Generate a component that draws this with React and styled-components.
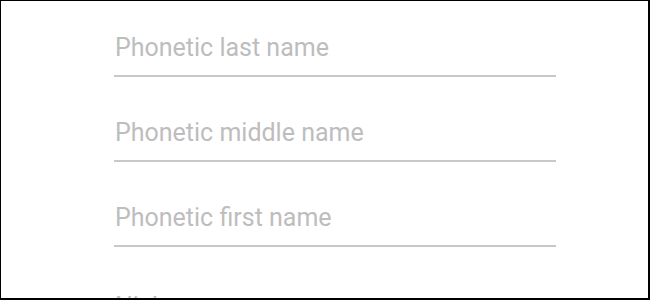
import React from 'react';
import styled, { createGlobalStyle } from 'styled-components';

const GlobalStyle = createGlobalStyle`
  html, body {
    margin: 0;
    padding: 0;
    background: #ffffff;
  }
`;

const Frame = styled.div`
  box-sizing: border-box;
  width: 650px;
  height: 300px;
  overflow: hidden;
  background: #ffffff;
  border-style: solid;
  border-color: #000000;
  border-width: 1px 2px 2px 1px;
  font-family: Roboto, "Noto Sans", sans-serif;
`;

const FieldList = styled.div`
  display: flex;
  flex-direction: column;
  gap: 41px;
  width: 442px;
  padding: 32px 0 0 113px;
`;

const Field = styled.label`
  display: block;
  padding-bottom: 12px;
  border-bottom: 2px solid ${(p) => (p.$bare ? 'transparent' : '#c8c8c8')};
  margin-top: ${(p) => p.$offset || 0}px;
`;

const Placeholder = styled.span`
  display: block;
  padding-left: 1px;
  font-size: 25px;
  line-height: 30px;
  color: #bdbdbd;
  white-space: nowrap;
`;

const fields = [
  'Phonetic last name',
  'Phonetic middle name',
  'Phonetic first name',
];

export default function App() {
  return (
    <>
      <GlobalStyle />
      <Frame>
        <FieldList>
          {fields.map((f) => (
            <Field key={f}>
              <Placeholder>{f}</Placeholder>
            </Field>
          ))}
          <Field $offset={4}>
            <Placeholder>Nickname</Placeholder>
          </Field>
        </FieldList>
      </Frame>
    </>
  );
}
